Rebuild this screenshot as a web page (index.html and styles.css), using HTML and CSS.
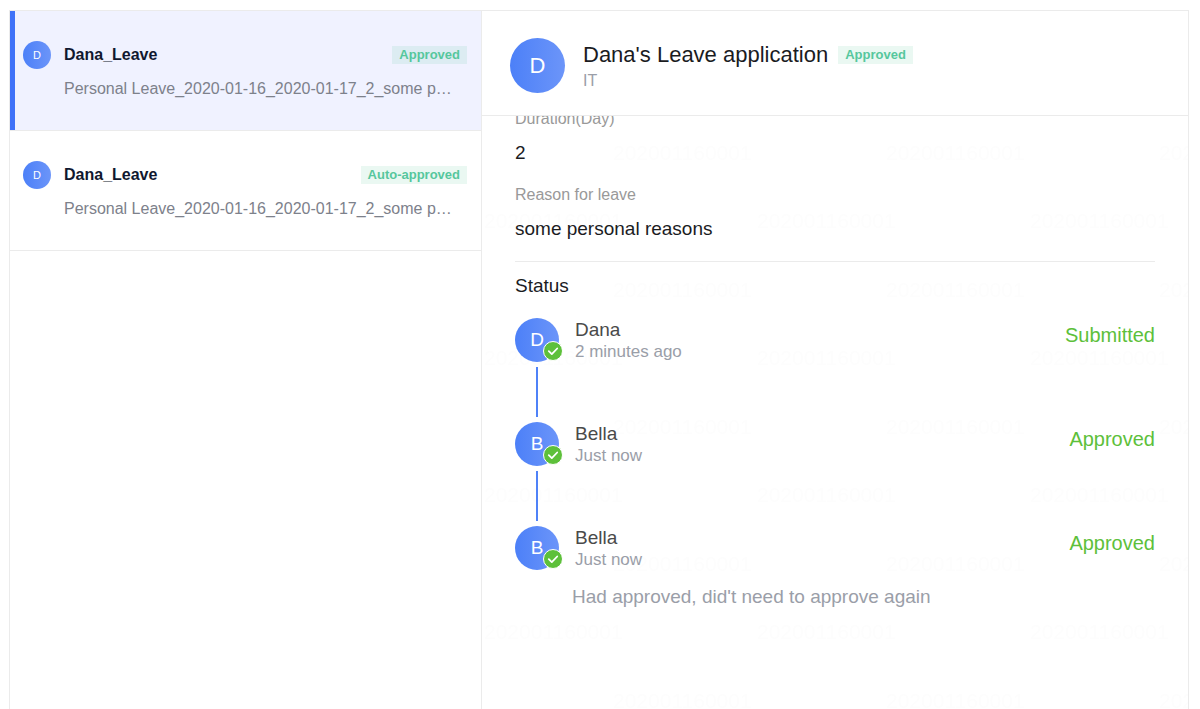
FILE: index.html
```html
<!DOCTYPE html>
<html lang="en">
    <head>
        <meta charset="utf-8" />
        <title>Leave application</title>
        <link rel="stylesheet" href="styles.css">
    </head>
    <body>
        <div class="box">
            <!-- application list -->
            <ul class="list">
                <li>
                    <a href="#" class="item current">
                        <span class="avatar small">D</span>
                        <span class="info">
                            <span class="top">
                                <strong class="name">Dana_Leave</strong>
                                <span class="tag">Approved</span>
                            </span>
                            <span class="desc">Personal Leave_2020-01-16_2020-01-17_2_some personal reasons</span>
                        </span>
                    </a>
                </li>
                <li>
                    <a href="#" class="item">
                        <span class="avatar small">D</span>
                        <span class="info">
                            <span class="top">
                                <strong class="name">Dana_Leave</strong>
                                <span class="tag">Auto-approved</span>
                            </span>
                            <span class="desc">Personal Leave_2020-01-16_2020-01-17_2_some personal reasons</span>
                        </span>
                    </a>
                </li>
            </ul>

            <!-- application detail -->
            <div class="detail">
                <svg class="watermark" aria-hidden="true">
                    <defs>
                        <pattern id="mark" width="273" height="137" patternUnits="userSpaceOnUse">
                            <text x="2" y="80">202001160001</text>
                            <text x="131" y="12">202001160001</text>
                            <text x="-142" y="12">202001160001</text>
                            <text x="131" y="149">202001160001</text>
                        </pattern>
                    </defs>
                    <rect width="100%" height="100%" fill="url(#mark)" />
                </svg>
                <div class="header">
                    <span class="avatar large">D</span>
                    <div>
                        <div class="title">
                            <h1>Dana's Leave application</h1>
                            <span class="tag">Approved</span>
                        </div>
                        <p class="dept">IT</p>
                    </div>
                </div>
                <div class="content">
                    <dl class="fields">
                        <dt>Duration(Day)</dt>
                        <dd>2</dd>
                        <dt>Reason for leave</dt>
                        <dd>some personal reasons</dd>
                    </dl>
                    <h2>Status</h2>
                    <ol class="steps">
                        <li>
                            <div class="side">
                                <span class="avatar">D
                                    <svg class="check" viewBox="0 0 20 20"><circle cx="10" cy="10" r="9.5" /><path d="M5.8 10.2l3 2.9 5.4-5.6" /></svg>
                                </span>
                            </div>
                            <div class="who">
                                <p class="person">Dana</p>
                                <p class="time">2 minutes ago</p>
                            </div>
                            <span class="state">Submitted</span>
                        </li>
                        <li>
                            <div class="side">
                                <span class="avatar">B
                                    <svg class="check" viewBox="0 0 20 20"><circle cx="10" cy="10" r="9.5" /><path d="M5.8 10.2l3 2.9 5.4-5.6" /></svg>
                                </span>
                            </div>
                            <div class="who">
                                <p class="person">Bella</p>
                                <p class="time">Just now</p>
                            </div>
                            <span class="state">Approved</span>
                        </li>
                        <li>
                            <div class="side">
                                <span class="avatar">B
                                    <svg class="check" viewBox="0 0 20 20"><circle cx="10" cy="10" r="9.5" /><path d="M5.8 10.2l3 2.9 5.4-5.6" /></svg>
                                </span>
                            </div>
                            <div class="who">
                                <p class="person">Bella</p>
                                <p class="time">Just now</p>
                            </div>
                            <span class="state">Approved</span>
                        </li>
                    </ol>
                    <p class="comment">Had approved, did't need to approve again</p>
                </div>
            </div>
        </div>
    </body>
</html>
```
FILE: styles.css
```css
* {
    margin: 0;
    padding: 0;
    box-sizing: border-box;
}

body {
    height: 100vh;
    padding: 10px 11px 0 9px;
    background-color: #fff;
    font-family: "Liberation Sans", Arial, sans-serif;
    font-size: 16px;
    line-height: 20px;
    overflow: hidden;
}

ul, ol {
    list-style: none;
}

a {
    color: inherit;
    text-decoration: none;
}

.box {
    display: flex;
    height: 100%;
    border-top: 1px solid #ebebeb;
}

.avatar {
    position: relative;
    display: flex;
    flex: none;
    align-items: center;
    justify-content: center;
    width: 44px;
    height: 44px;
    border-radius: 50%;
    background: linear-gradient(to right, #4c80f8, #6c95f9);
    color: #fff;
    font-size: 19px;
}

.avatar.small {
    width: 28px;
    height: 28px;
    font-size: 11px;
}

.avatar.large {
    width: 55px;
    height: 55px;
    font-size: 22px;
}

.tag {
    padding: 0 7px;
    background-color: rgba(80, 200, 150, .12);
    color: #56c79d;
    font-size: 13px;
    font-weight: bold;
    line-height: 18px;
}

/* list */
.list {
    flex: 0 0 40%;
    min-width: 0;
    border-left: 1px solid #ebebeb;
}

.list li {
    border-bottom: 1px solid #ebebeb;
}

.item {
    display: flex;
    gap: 13px;
    padding: 30px 14px 31px 8px;
    border-left: 5px solid transparent;
}

.item.current {
    border-left-color: #3f72f8;
    background-color: #f0f2ff;
}

.info {
    flex: 1;
    min-width: 0;
}

.top {
    display: flex;
    align-items: center;
    justify-content: space-between;
    height: 28px;
}

.name {
    color: #10182f;
}

.desc {
    display: block;
    margin: 10px 7px 0 0;
    color: #7d818b;
    overflow: hidden;
    white-space: nowrap;
    text-overflow: ellipsis;
}

/* detail */
.detail {
    position: relative;
    display: flex;
    flex: 1;
    flex-direction: column;
    min-width: 0;
    border-left: 1px solid #ebebeb;
    border-right: 1px solid #ebebeb;
}

.watermark {
    position: absolute;
    top: 0;
    left: 0;
    width: 100%;
    height: 100%;
    pointer-events: none;
}

.watermark text {
    fill: #fdfdfd;
    font-size: 21px;
}

.header {
    position: relative;
    display: flex;
    flex: none;
    align-items: center;
    gap: 18px;
    height: 105px;
    padding: 5px 28px 0;
    border-bottom: 1px solid #ebebeb;
    background-color: #fff;
}

.title {
    display: flex;
    align-items: center;
    gap: 10px;
    margin-bottom: 2px;
}

h1 {
    color: #1b1c1f;
    font-size: 22px;
    font-weight: normal;
    line-height: 28px;
}

.dept {
    color: #9a9ea8;
}

.content {
    position: relative;
    flex: 1;
    min-height: 0;
    padding: 0 33px;
    overflow: hidden;
}

/* scrolled a little under the header */
.fields {
    margin-top: -7px;
    border-bottom: 1px solid #ebebeb;
}

.fields dt {
    margin-bottom: 12px;
    color: #999;
}

.fields dd {
    padding-bottom: 20px;
    color: #1b1c1f;
    font-size: 19px;
    line-height: 24px;
}

h2 {
    margin: 12px 0 20px;
    color: #1b1c1f;
    font-size: 19px;
    font-weight: normal;
    line-height: 24px;
}

.steps li {
    display: flex;
    gap: 16px;
}

.side {
    display: flex;
    flex-direction: column;
    align-items: center;
    height: 104px;
}

.side::after {
    content: "";
    flex: 1;
    width: 2px;
    margin: 5px 0;
    background-color: #4f82f8;
}

.steps li:last-child .side {
    height: auto;
}

.steps li:last-child .side::after {
    display: none;
}

.check {
    position: absolute;
    right: -4px;
    bottom: 1px;
    width: 20px;
    height: 20px;
    fill: #5dc03a;
    stroke: #fff;
}

.check path {
    fill: none;
    stroke-width: 1.8;
    stroke-linecap: round;
    stroke-linejoin: round;
}

.who {
    flex: 1;
}

.person {
    color: #4a4a4a;
    font-size: 19px;
    line-height: 24px;
}

.time {
    color: #9a9ea8;
    font-size: 17px;
}

.state {
    margin-top: 5px;
    color: #5dc03a;
    font-size: 20px;
    line-height: 24px;
}

.comment {
    margin: 15px 0 0 57px;
    color: #9a9ea8;
    font-size: 19px;
    line-height: 24px;
}
```
